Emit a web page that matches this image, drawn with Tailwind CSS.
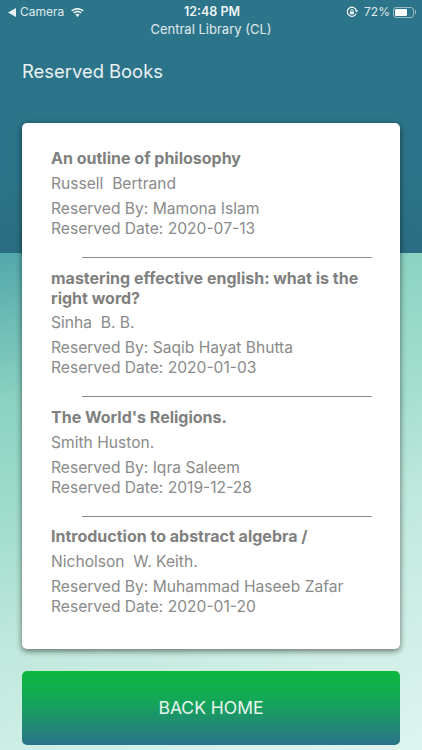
<!DOCTYPE html>
<html>
<head>
  <meta charset="UTF-8">
  <meta name="viewport" content="width=device-width, initial-scale=1.0">
  <script src="https://cdn.jsdelivr.net/npm/@tailwindcss/browser@4"></script>
  <title>Reserved Books</title>
</head>
<body>
<section class="relative h-[750px] w-[422px] overflow-hidden font-['Inter',sans-serif] bg-[linear-gradient(160deg,#2c7489_0%,#52a8ab_28%,#8cd3c2_45%,#a5dfcf_60%,#bfe8dc_71%,#d2f0e8_88%,#def4ef_100%)]">
  <div class="absolute inset-x-0 top-0 h-[253px] bg-[linear-gradient(180deg,#2c7489_0%,#2c7489_70%,#2a6d82_100%)]"></div>

  <div class="relative">
    <div class="flex h-[23px] items-center justify-between pl-2 pr-[6px] pt-[1px] text-[12px] text-white/85">
      <div class="flex w-[130px] items-center gap-1">
        <svg width="8" height="9" viewBox="0 0 8 9"><path d="M0 4.5 8 0v9z" fill="#fff" fill-opacity=".9"/></svg>
        <span>Camera</span>
        <svg width="15" height="11" viewBox="0 0 16 12" fill="#fff" class="ml-[2px]"><path d="M8 2.600c2.200 0 4.200.9 5.700 2.300l1.100-1.200C13 2 10.600 1 8 1S3 2 1.200 3.700l1.100 1.200C3.800 3.500 5.800 2.600 8 2.600z"/><path d="M8 5.800c1.300 0 2.500.5 3.400 1.300l1.100-1.200C11.300 4.800 9.700 4.200 8 4.200s-3.300.6-4.500 1.700l1.100 1.200C5.500 6.300 6.700 5.800 8 5.800z"/><path d="M8 7.400c-.9 0-1.600.3-2.200.8L8 10.800l2.200-2.600c-.6-.5-1.300-.8-2.200-.8z"/></svg>
      </div>
      <span class="text-[12.5px] font-semibold text-white/95">12:48 PM</span>
      <div class="flex w-[130px] items-center justify-end gap-[3px]">
        <svg width="12" height="12" viewBox="0 0 12 12" fill="none" class="mr-[3px]"><path d="M10.200 7.600A4.600 4.600 0 1 1 10.500 5" stroke="#fff" stroke-width="1.100"/><path d="M9 4.400h3L10.500 6.400z" fill="#fff"/><rect x="3.900" y="5.400" width="4" height="2.900" rx=".5" fill="#fff"/><path d="M4.700 5.500V4.700a1.200 1.200 0 0 1 2.400 0v.8" stroke="#fff" stroke-width=".8"/></svg>
        <span>72%</span>
        <div class="flex items-center">
          <div class="h-[11px] w-[21px] rounded-[3px] border border-white/50 p-[1px]"><div class="h-full w-[72%] rounded-[1px] bg-white"></div></div>
          <div class="ml-[1px] h-[4px] w-[1px] bg-white/50"></div>
        </div>
      </div>
    </div>

    <p class="mt-[-1px] text-center text-[13px] leading-[14px] text-white/85">Central Library (CL)</p>
    <h1 class="mt-[23px] pl-[22px] text-[18.4px] leading-[24px] text-white/90">Reserved Books</h1>

    <div class="mx-[22px] mt-[40px] h-[526px] rounded-[5px] bg-white pl-[29px] pr-[28px] pt-[25px] text-[15.6px] leading-[20px] text-[#8a8a8a] shadow-[0_2px_6px_rgba(0,0,0,0.55)]">
      <div>
        <p class="text-[16px] font-bold text-[#808080]">An outline of philosophy</p>
        <p class="mt-[6px]">Russell&nbsp; Bertrand</p>
        <p class="mt-[5px]">Reserved By: Mamona Islam</p>
        <p>Reserved Date: 2020-07-13</p>
      </div>
      <div class="ml-[31px] mb-[10px] mt-[18px] h-px bg-[#8c8c8c]"></div>
      <div>
        <p class="text-[16px] font-bold text-[#808080]">mastering effective english: what is the right word?</p>
        <p class="mt-[5px]">Sinha&nbsp; B. B.</p>
        <p class="mt-[5px]">Reserved By: Saqib Hayat Bhutta</p>
        <p>Reserved Date: 2020-01-03</p>
      </div>
      <div class="ml-[31px] mb-[10px] mt-[18px] h-px bg-[#8c8c8c]"></div>
      <div>
        <p class="text-[16px] font-bold text-[#808080]">The World's Religions.</p>
        <p class="mt-[6px]">Smith Huston.</p>
        <p class="mt-[5px]">Reserved By: Iqra Saleem</p>
        <p>Reserved Date: 2019-12-28</p>
      </div>
      <div class="ml-[31px] mb-[9px] mt-[18px] h-px bg-[#8c8c8c]"></div>
      <div>
        <p class="text-[16px] font-bold text-[#808080]">Introduction to abstract algebra /</p>
        <p class="mt-[6px]">Nicholson&nbsp; W. Keith.</p>
        <p class="mt-[5px]">Reserved By: Muhammad Haseeb Zafar</p>
        <p>Reserved Date: 2020-01-20</p>
      </div>
    </div>

    <button class="mx-[22px] mt-[22px] flex h-[74px] w-[378px] items-center justify-center rounded-[5px] bg-[linear-gradient(180deg,#0bb83e_0%,#14a658_40%,#2b748a_100%)] text-[17.5px] text-white/90">BACK HOME</button>
  </div>
</section>
</body>
</html>
